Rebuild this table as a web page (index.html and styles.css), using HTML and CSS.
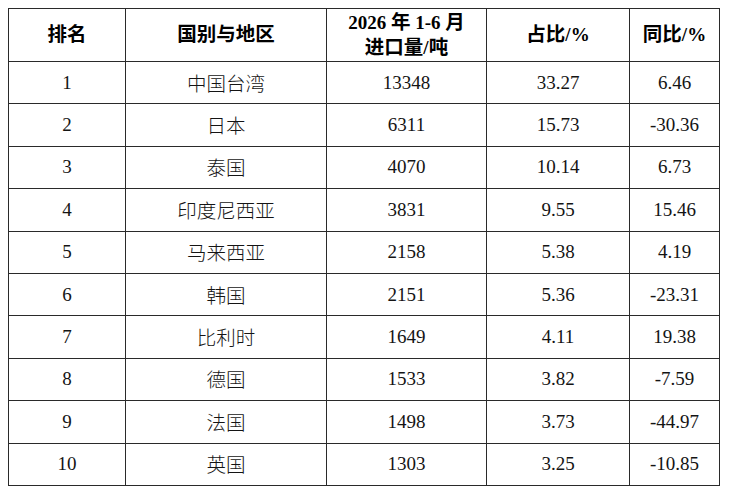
FILE: index.html
```html
<!DOCTYPE html>
<html lang="zh-CN">
<head>
<meta charset="utf-8">
<title>2026年1-6月进口量</title>
<link rel="stylesheet" href="styles.css">
</head>
<body>
<div class="page">
<table class="data">
  <colgroup>
    <col class="c1"><col class="c2"><col class="c3"><col class="c4"><col class="c5">
  </colgroup>
  <thead>
    <tr>
      <th><span class="cjk">排名</span></th>
      <th><span class="cjk">国别与地区</span></th>
      <th><div class="h-line">2026 <span class="cjk">年</span> 1-6 <span class="cjk">月</span></div><div class="h-line"><span class="cjk">进口量</span>/<span class="cjk">吨</span></div></th>
      <th><span class="cjk">占比</span>/%</th>
      <th><span class="cjk">同比</span>/%</th>
    </tr>
  </thead>
  <tbody>
    <tr><td>1</td><td class="cjk">中国台湾</td><td>13348</td><td>33.27</td><td>6.46</td></tr>
    <tr><td>2</td><td class="cjk">日本</td><td>6311</td><td>15.73</td><td>-30.36</td></tr>
    <tr><td>3</td><td class="cjk">泰国</td><td>4070</td><td>10.14</td><td>6.73</td></tr>
    <tr><td>4</td><td class="cjk">印度尼西亚</td><td>3831</td><td>9.55</td><td>15.46</td></tr>
    <tr><td>5</td><td class="cjk">马来西亚</td><td>2158</td><td>5.38</td><td>4.19</td></tr>
    <tr><td>6</td><td class="cjk">韩国</td><td>2151</td><td>5.36</td><td>-23.31</td></tr>
    <tr><td>7</td><td class="cjk">比利时</td><td>1649</td><td>4.11</td><td>19.38</td></tr>
    <tr><td>8</td><td class="cjk">德国</td><td>1533</td><td>3.82</td><td>-7.59</td></tr>
    <tr><td>9</td><td class="cjk">法国</td><td>1498</td><td>3.73</td><td>-44.97</td></tr>
    <tr><td>10</td><td class="cjk">英国</td><td>1303</td><td>3.25</td><td>-10.85</td></tr>
  </tbody>
</table>
</div>
</body>
</html>
```

FILE: styles.css
```css
html, body {
  margin: 0;
  padding: 0;
  background: #ffffff;
}

.page {
  padding: 8px 0 0 8px;
}

.data {
  border-collapse: collapse;
  table-layout: fixed;
  width: 711px;
  font-family: "Liberation Serif", "Times New Roman", "Noto Sans CJK SC", serif;
  font-size: 19px;
  line-height: 22px;
  color: #141414;
}

.c1 { width: 117px; }
.c2 { width: 201px; }
.c3 { width: 160px; }
.c4 { width: 143px; }
.c5 { width: 90px; }

.data th,
.data td {
  border: 1px solid #2a2a2a;
  text-align: center;
  vertical-align: middle;
  padding: 0;
  line-height: 22px;
}

.data th {
  height: 52px;
  font-weight: bold;
  color: #000;
}

.data td {
  height: 41.4px;
}

.cjk {
  font-family: "Noto Sans CJK SC", sans-serif;
}

td.cjk {
  font-weight: 300;
  font-size: 19.5px;
}

th .cjk {
  font-size: 19.5px;
  line-height: 16px;
}

.data th .h-line {
  line-height: 25px;
}
```
